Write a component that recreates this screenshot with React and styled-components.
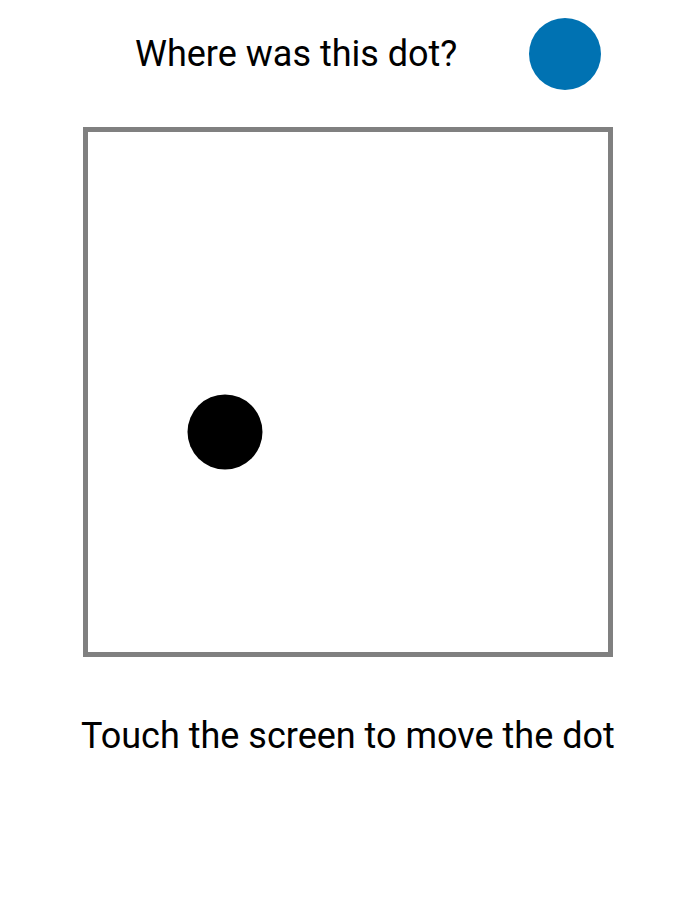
import React from 'react';
import styled, { createGlobalStyle } from 'styled-components';

const GlobalStyle = createGlobalStyle`
  body {
    margin: 0;
    background: #ffffff;
    font-family: Roboto, "Liberation Sans", sans-serif;
    color: #000000;
  }
`;

const Page = styled.div`
  width: 700px;
  height: 900px;
  display: flex;
  flex-direction: column;
`;

const Header = styled.div`
  display: flex;
  align-items: center;
  gap: 72px;
  padding: 18px 0 0 135px;
  height: 72px;
`;

const Title = styled.h1`
  margin: 0;
  font-size: 36px;
  font-weight: 400;
  line-height: 42px;
`;

const Dot = styled.div`
  width: ${(p) => p.size}px;
  height: ${(p) => p.size}px;
  border-radius: 50%;
  background: ${(p) => p.color};
  flex-shrink: 0;
`;

const Board = styled.div`
  position: relative;
  box-sizing: border-box;
  width: 530px;
  height: 530px;
  margin: 37px 0 0 83px;
  border: 5px solid #808080;
`;

const Marker = styled(Dot)`
  position: absolute;
  transform: translate(-50%, -50%);
`;

const Hint = styled.p`
  width: 530px;
  margin: 58px 0 0 81px;
  text-align: center;
  font-size: 36px;
  line-height: 42px;
  white-space: nowrap;
`;

export default function App() {
  const target = { x: 137, y: 300 };
  return (
    <>
      <GlobalStyle />
      <Page>
        <Header>
          <Title>Where was this dot?</Title>
          <Dot size={72} color="#0072B2" />
        </Header>
        <Board>
          <Marker size={75} color="#000000" style={{ left: target.x, top: target.y }} />
        </Board>
        <Hint>Touch the screen to move the dot</Hint>
      </Page>
    </>
  );
}
